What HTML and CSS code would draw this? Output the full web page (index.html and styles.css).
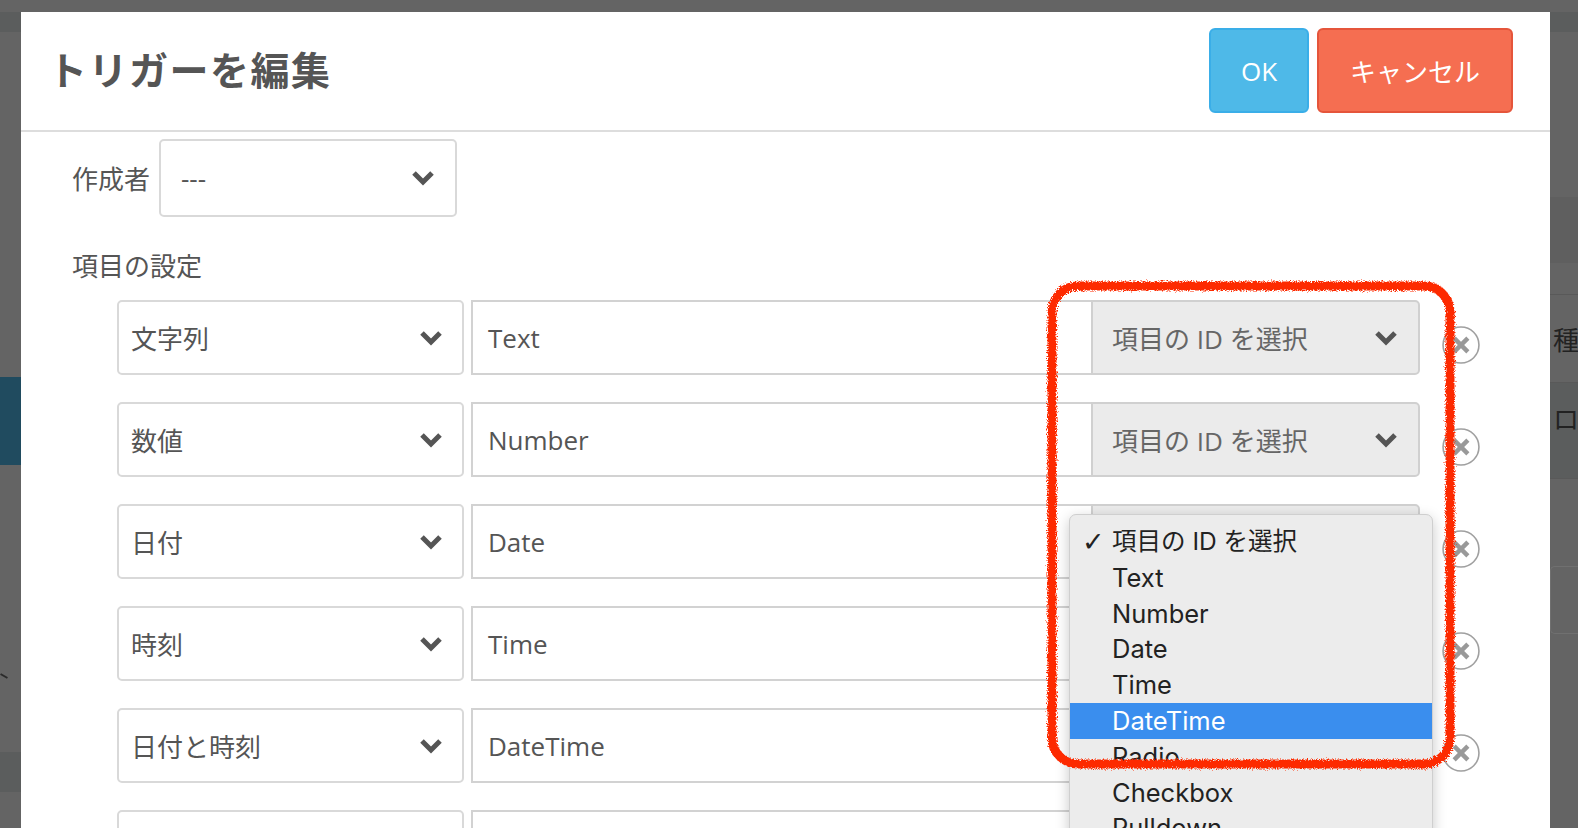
FILE: index.html
```html
<!DOCTYPE html>
<html>
<head>
<meta charset="utf-8">
<link rel="stylesheet" href="styles.css">
</head>
<body>
<div class="topbar"></div>
<div class="stage">
  <div class="side-left">
    <div class="band dark" style="height:20px"></div>
    <div class="band" style="height:345px"></div>
    <div class="band navy" style="height:88px"></div>
    <div class="band" style="height:287px"><span class="slash"></span></div>
    <div class="band dark" style="height:40px"></div>
    <div class="band" style="height:36px"></div>
  </div>

  <div class="modal">
    <div class="modal-head">
      <h1 class="title">トリガーを編集</h1>
      <div class="actions">
        <button class="btn btn-ok">OK</button>
        <button class="btn btn-cancel">キャンセル</button>
      </div>
    </div>

    <div class="modal-body">
      <div class="author-row">
        <span class="label">作成者</span>
        <div class="select author-select">
          <span>---</span>
          <svg class="chev" viewBox="0 0 24 16"><polyline points="3,3 12,12 21,3"/></svg>
        </div>
      </div>

      <div class="section-label">項目の設定</div>

      <div class="rows">
        <div class="row">
          <div class="select type-select"><span>文字列</span><svg class="chev" viewBox="0 0 24 16"><polyline points="3,3 12,12 21,3"/></svg></div>
          <div class="input-group">
            <div class="input">Text</div>
            <div class="id-select"><span>項目の ID を選択</span><svg class="chev" viewBox="0 0 24 16"><polyline points="3,3 12,12 21,3"/></svg></div>
          </div>
          <svg class="remove" viewBox="0 0 36 36"><circle cx="18" cy="18" r="17"/><path d="M11.5 11.5 L24.5 24.5 M24.5 11.5 L11.5 24.5"/></svg>
        </div>
        <div class="row">
          <div class="select type-select"><span>数値</span><svg class="chev" viewBox="0 0 24 16"><polyline points="3,3 12,12 21,3"/></svg></div>
          <div class="input-group">
            <div class="input">Number</div>
            <div class="id-select"><span>項目の ID を選択</span><svg class="chev" viewBox="0 0 24 16"><polyline points="3,3 12,12 21,3"/></svg></div>
          </div>
          <svg class="remove" viewBox="0 0 36 36"><circle cx="18" cy="18" r="17"/><path d="M11.5 11.5 L24.5 24.5 M24.5 11.5 L11.5 24.5"/></svg>
        </div>
        <div class="row">
          <div class="select type-select"><span>日付</span><svg class="chev" viewBox="0 0 24 16"><polyline points="3,3 12,12 21,3"/></svg></div>
          <div class="input-group">
            <div class="input">Date</div>
            <div class="id-select"><span>項目の ID を選択</span><svg class="chev" viewBox="0 0 24 16"><polyline points="3,3 12,12 21,3"/></svg></div>
          </div>
          <svg class="remove" viewBox="0 0 36 36"><circle cx="18" cy="18" r="17"/><path d="M11.5 11.5 L24.5 24.5 M24.5 11.5 L11.5 24.5"/></svg>
        </div>
        <div class="row">
          <div class="select type-select"><span>時刻</span><svg class="chev" viewBox="0 0 24 16"><polyline points="3,3 12,12 21,3"/></svg></div>
          <div class="input-group">
            <div class="input">Time</div>
            <div class="id-select"><span>項目の ID を選択</span><svg class="chev" viewBox="0 0 24 16"><polyline points="3,3 12,12 21,3"/></svg></div>
          </div>
          <svg class="remove" viewBox="0 0 36 36"><circle cx="18" cy="18" r="17"/><path d="M11.5 11.5 L24.5 24.5 M24.5 11.5 L11.5 24.5"/></svg>
        </div>
        <div class="row">
          <div class="select type-select"><span>日付と時刻</span><svg class="chev" viewBox="0 0 24 16"><polyline points="3,3 12,12 21,3"/></svg></div>
          <div class="input-group">
            <div class="input">DateTime</div>
            <div class="id-select"><span>項目の ID を選択</span><svg class="chev" viewBox="0 0 24 16"><polyline points="3,3 12,12 21,3"/></svg></div>
          </div>
          <svg class="remove" viewBox="0 0 36 36"><circle cx="18" cy="18" r="17"/><path d="M11.5 11.5 L24.5 24.5 M24.5 11.5 L11.5 24.5"/></svg>
        </div>
        <div class="row">
          <div class="select type-select"></div>
          <div class="input-group">
            <div class="input"></div>
            <div class="id-select"></div>
          </div>
          <svg class="remove" viewBox="0 0 36 36"><circle cx="18" cy="18" r="17"/></svg>
        </div>
      </div>
    </div>

    <ul class="menu">
      <li><span class="tick">✓</span><span class="ja">項目の ID を選択</span></li>
      <li><span class="tick"></span>Text</li>
      <li><span class="tick"></span>Number</li>
      <li><span class="tick"></span>Date</li>
      <li><span class="tick"></span>Time</li>
      <li class="active"><span class="tick"></span>DateTime</li>
      <li><span class="tick"></span>Radio</li>
      <li><span class="tick"></span>Checkbox</li>
      <li><span class="tick"></span>Pulldown</li>
    </ul>

    <svg class="mark" viewBox="0 0 412 492">
      <defs>
        <filter id="crayon" x="-5%" y="-5%" width="110%" height="110%">
          <feTurbulence type="fractalNoise" baseFrequency="0.8" numOctaves="2" seed="3"/>
          <feDisplacementMap in="SourceGraphic" scale="6"/>
        </filter>
      </defs>
      <rect x="7" y="7" width="398" height="478" rx="26" ry="26" filter="url(#crayon)"/>
    </svg>
  </div>

  <div class="side-right">
    <div class="band dark" style="height:20px"></div>
    <div class="band" style="height:165px"></div>
    <div class="band dim" style="height:66px"></div>
    <div class="band line" style="height:32px"></div>
    <div class="band line cell" style="height:88px">種</div>
    <div class="band dark line cell top" style="height:96px">ロ</div>
    <div class="band" style="height:87px"></div>
    <div class="band" style="height:68px"><div class="ghost-box"></div></div>
  </div>
</div>
</body>
</html>
```

FILE: styles.css
```css
body {
  margin: 0;
  height: 828px;
  overflow: hidden;
  background: #646464;
  font-family: "Open Sans", "Noto Sans CJK JP", sans-serif;
  color: #555;
}
.topbar {
  height: 12px;
  background: #646464;
}
.stage {
  display: flex;
  height: 816px;
}

/* backdrop strips around the dialog */
.side-left {
  width: 21px;
  flex: none;
  display: flex;
  flex-direction: column;
}
.side-right {
  flex: 1;
  overflow: hidden;
  display: flex;
  flex-direction: column;
}
.band {
  background: #646464;
  flex: none;
  position: relative;
}
.band.dark { background: #5b5d5d; }
.band.dim { background: #5f5f5f; }
.band.navy { background: #204b5f; }
.band.line { border-bottom: 1px solid #595959; box-sizing: border-box; }
.band.cell {
  font-family: "Noto Sans CJK JP", sans-serif;
  font-size: 26px;
  color: #222;
  display: flex;
  align-items: center;
  padding-left: 3px;
}
.band.cell.top {
  align-items: flex-start;
  padding-top: 16px;
}
.slash {
  position: absolute;
  left: 0;
  top: 210px;
  width: 8px;
  height: 2px;
  background: #2a2a2a;
  transform: rotate(30deg);
}
.ghost-box {
  height: 66px;
  border: 1px solid #707070;
  border-right: none;
  border-radius: 5px 0 0 5px;
}

/* dialog */
.modal {
  width: 1529px;
  flex: none;
  background: #fff;
  position: relative;
}
.modal-head {
  display: flex;
  align-items: center;
  justify-content: space-between;
  padding: 16px 37px 17px 27px;
  border-bottom: 2px solid #ddd;
}
.title {
  margin: 0 0 6px;
  font-family: "Noto Sans CJK JP", sans-serif;
  font-size: 39px;
  font-weight: 700;
  color: #555;
  letter-spacing: 1.5px;
}
.actions {
  display: flex;
  gap: 8px;
}
.btn {
  height: 85px;
  border: 2px solid;
  border-radius: 6px;
  color: #fff;
  font-family: "Open Sans", "Noto Sans CJK JP", sans-serif;
  font-size: 26px;
  padding: 0;
}
.btn-ok {
  width: 100px;
  background: #4eb9e8;
  border-color: #3aaee8;
}
.btn-cancel {
  width: 196px;
  background: #f56e51;
  border-color: #e5553b;
}

.modal-body {
  padding: 7px 0 0 51px;
}
.label {
  font-size: 26px;
  width: 78px;
}
.author-row {
  display: flex;
  align-items: center;
  gap: 9px;
}
.select {
  box-sizing: border-box;
  display: flex;
  align-items: center;
  justify-content: space-between;
  border: 2px solid #d9d9d9;
  border-radius: 5px;
  font-size: 26px;
  color: #555;
  background: #fff;
}
.author-select {
  width: 298px;
  height: 78px;
  padding: 0 20px 0 20px;
}
.chev {
  width: 24px;
  height: 16px;
  fill: none;
  stroke: #555;
  stroke-width: 5;
  stroke-linejoin: miter;
}
.section-label {
  font-size: 26px;
  line-height: 36px;
  margin: 31px 0 16px;
}
.rows {
  display: flex;
  flex-direction: column;
  gap: 27px;
  padding-left: 45px;
}
.row {
  display: flex;
  align-items: center;
  height: 75px;
}
.type-select {
  width: 347px;
  height: 75px;
  padding: 0 19px 0 12px;
}
.input-group {
  display: flex;
  width: 949px;
  height: 75px;
  margin-left: 7px;
}
.input {
  flex: 1;
  box-sizing: border-box;
  border: 2px solid #d2d2d2;
  border-right: none;
  padding-left: 15px;
  font-size: 26px;
  display: flex;
  align-items: center;
  color: #555;
}
.id-select {
  width: 329px;
  box-sizing: border-box;
  display: flex;
  align-items: center;
  justify-content: space-between;
  padding: 0 20px 0 19px;
  background: #ebebeb;
  border: 2px solid #d0d0d0;
  border-radius: 0 5px 5px 0;
  font-size: 26px;
  color: #666;
}
.remove {
  width: 38px;
  height: 38px;
  margin-left: 22px;
  margin-top: 15px;
}
.remove circle {
  fill: #fff;
  stroke: #a0a0a0;
  stroke-width: 1.5;
}
.remove path {
  stroke: #999;
  stroke-width: 4.2;
}

/* opened native dropdown */
.menu {
  position: absolute;
  left: 1048px;
  top: 502px;
  width: 362px;
  height: 340px;
  margin: 0;
  padding: 9px 0 0;
  list-style: none;
  background: #ececec;
  border: 1px solid #cfcfcf;
  border-radius: 7px;
  box-shadow: 0 4px 14px rgba(0, 0, 0, 0.22);
  font-family: "Inter", "Noto Sans CJK JP", sans-serif;
  font-size: 25.5px;
  color: #222;
}
.menu li {
  height: 35.8px;
  line-height: 35.8px;
  display: flex;
}
.menu li.active {
  background: #3a8eee;
  color: #fff;
}
.menu .ja {
  font-size: 24.5px;
}
.tick {
  width: 30px;
  padding-left: 12px;
  flex: none;
  font-family: "DejaVu Sans", sans-serif;
  font-size: 27px;
}

/* red hand-drawn annotation */
.mark {
  position: absolute;
  left: 1024px;
  top: 267px;
  width: 412px;
  height: 492px;
  overflow: visible;
}
.mark rect {
  fill: none;
  stroke: #fd2a04;
  stroke-width: 9;
}
```
